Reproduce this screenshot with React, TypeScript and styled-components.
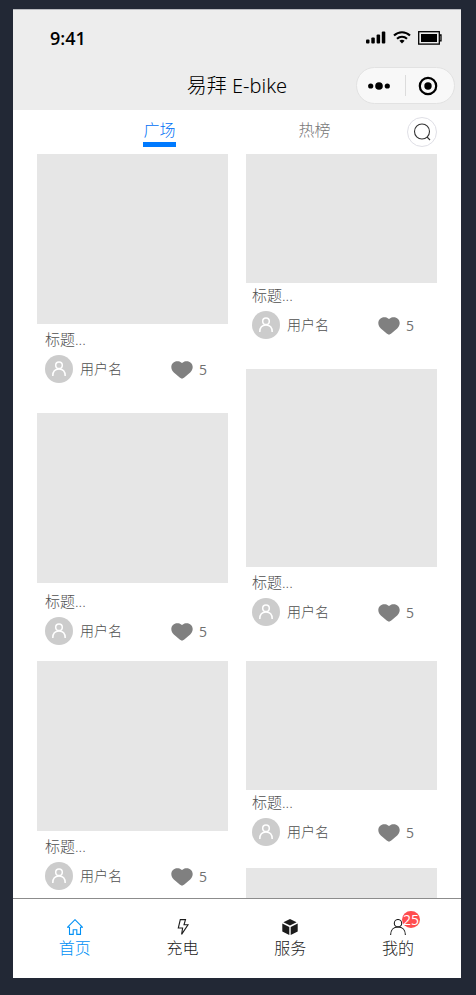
import React from "react";
import styled, { createGlobalStyle } from "styled-components";

const GlobalStyle = createGlobalStyle`
  * { box-sizing: border-box; }
  body {
    margin: 0;
    background: #222835;
    font-family: "Open Sans", "Noto Sans CJK SC", sans-serif;
    font-weight: 300;
    color: #333;
  }
  button {
    font: inherit;
    color: inherit;
    border: 0;
    padding: 0;
    background: none;
    cursor: pointer;
  }
  svg { display: block; }
`;

const Phone = styled.div`
  display: flex;
  flex-direction: column;
  height: calc(100vh - 26px);
  margin: 9px 15px 17px 13px;
  background: #fff;
  border-top: 1px solid #b9bbc0;
  overflow: hidden;
`;

const Header = styled.header`
  flex: none;
  background: #ededed;
  color: #000;
  padding-bottom: 6px;
`;

const StatusBar = styled.div`
  display: flex;
  align-items: center;
  justify-content: space-between;
  height: 57px;
  padding: 0 19px 2px 37px;
`;

const Clock = styled.span`
  font-size: 18px;
  font-weight: 600;
  line-height: 24px;
`;

const StatusIcons = styled.div`
  display: flex;
  align-items: center;
  gap: 7px;
`;

const TitleBar = styled.div`
  display: grid;
  grid-template-columns: 1fr auto 1fr;
  align-items: center;
  padding: 0 6px;
`;

const Title = styled.h1`
  grid-column: 2;
  margin: 0;
  font-family: "Noto Sans", "Noto Sans CJK SC", sans-serif;
  font-size: 20px;
  line-height: 28px;
  font-weight: 300;
`;

const Capsule = styled.div`
  justify-self: end;
  display: grid;
  grid-template-columns: 1fr 1px 1fr;
  align-items: center;
  width: 99px;
  height: 37px;
  border: 1px solid #e2e2e2;
  border-radius: 19px;
  background: #f8f8f8;
`;

const CapsuleButton = styled.button`
  display: flex;
  justify-content: center;
  padding-right: 5px;
`;

const CapsuleDivider = styled.span`
  height: 21px;
  background: #dcdcdc;
`;

const Toolbar = styled.div`
  flex: none;
  display: flex;
  gap: 15px;
  height: 44px;
  padding: 7px 24px 7px 69px;
`;

const Tabs = styled.nav`
  flex: 1;
  display: grid;
  grid-template-columns: 1fr 1fr;
  justify-items: center;
`;

const Tab = styled.button<{ $active?: boolean }>`
  height: 30px;
  font-size: 16px;
  line-height: 24px;
  color: ${(p) => (p.$active ? "#0070f5" : "#777")};
  border-bottom: 5px solid ${(p) => (p.$active ? "#007aff" : "transparent")};
`;

const SearchButton = styled.button`
  display: flex;
  align-items: center;
  justify-content: center;
  width: 30px;
  height: 30px;
  border: 1px solid #dfdfe6;
  border-radius: 50%;
`;

const Feed = styled.main`
  flex: 1;
  min-height: 0;
  display: grid;
  grid-template-columns: 1fr 1fr;
  gap: 18px;
  padding: 0 24px;
  overflow-y: auto;
  scrollbar-width: none;
`;

const Column = styled.div<{ $inset: number }>`
  --inset: ${(p) => p.$inset}px;
`;

const Card = styled.article<{ $after: number }>`
  margin-bottom: ${(p) => p.$after}px;
`;

const Cover = styled.div<{ $height: number }>`
  height: ${(p) => p.$height}px;
  background: #e6e6e6;
`;

const Caption = styled.div<{ $top: number }>`
  padding: ${(p) => p.$top}px calc(29px - var(--inset)) 0 var(--inset);
  color: #505050;
`;

const CardTitle = styled.h2`
  margin: 0 0 6px;
  font-size: 15px;
  line-height: 20px;
  font-weight: 300;
`;

const Meta = styled.div`
  display: flex;
  align-items: center;
  height: 28px;
  font-size: 14px;
  line-height: 20px;
`;

const Avatar = styled.span`
  display: flex;
  align-items: center;
  justify-content: center;
  width: 28px;
  height: 28px;
  margin-right: 7px;
  border-radius: 50%;
  background: #ccc;
`;

const Like = styled.button`
  display: flex;
  align-items: center;
  gap: 6px;
  margin-left: auto;
  padding-top: 2px;
  font-weight: 400;
  color: #707070;
`;

const TabBar = styled.nav`
  flex: none;
  display: grid;
  grid-template-columns: repeat(4, 1fr);
  height: 80px;
  padding: 20px 9px 0 8px;
  border-top: 1px solid #8c8c8c;
  background: #fff;
`;

const TabBarLink = styled.a<{ $active?: boolean }>`
  display: flex;
  flex-direction: column;
  align-items: center;
  gap: 1px;
  font-size: 16px;
  line-height: 24px;
  text-decoration: none;
  color: ${(p) => (p.$active ? "#0090f5" : "#1c1c1c")};
`;

const IconHolder = styled.span`
  position: relative;
`;

const Badge = styled.span`
  position: absolute;
  left: 12px;
  top: -8px;
  width: 18px;
  height: 17px;
  border-radius: 50%;
  background: #ff4d4f;
  color: #fff;
  font-size: 14px;
  line-height: 17px;
  font-weight: 400;
  display: flex;
  justify-content: center;
`;

const SignalIcon = () => (
  <svg width="20" height="13" viewBox="0 0 20 13" aria-hidden="true">
    <rect x="0" y="8.500" width="3.500" height="4" rx="1" />
    <rect x="5.300" y="6.500" width="3.500" height="6" rx="1" />
    <rect x="10.600" y="3.500" width="3.500" height="9" rx="1" />
    <rect x="15.800" y=".5" width="3.500" height="12" rx="1" />
  </svg>
);

const WifiIcon = () => (
  <svg width="18" height="13" viewBox="0 0 18 13" fill="none" stroke="#000" strokeWidth="2.1" aria-hidden="true">
    <path d="M1 4.600C5.600.2 12.400.2 17 4.600" />
    <path d="M4 7.800c2.900-2.700 7.100-2.700 10 0" />
    <path d="M6.400 9.800c1.600-1.300 3.600-1.300 5.200 0L9 12.400z" fill="#000" stroke="none" />
  </svg>
);

const BatteryIcon = () => (
  <svg width="24" height="14" viewBox="0 0 24 14" aria-hidden="true">
    <rect x=".7" y=".7" width="20.600" height="12.400" fill="none" stroke="#000" strokeWidth="1.3" />
    <rect x="3" y="3" width="16" height="8" />
    <path d="M21.300 4h1.700v5.800h-1.700" fill="none" stroke="#000" strokeWidth="1.3" />
  </svg>
);

const DotsIcon = () => (
  <svg width="22" height="8" viewBox="0 0 22 8" aria-hidden="true">
    <circle cx="2.7" cy="4" r="2.6" />
    <circle cx="11" cy="4" r="3.8" />
    <circle cx="19.3" cy="4" r="2.6" />
  </svg>
);

const TargetIcon = () => (
  <svg width="20" height="20" viewBox="0 0 20 20" aria-hidden="true">
    <circle cx="10" cy="10" r="8.2" fill="none" stroke="#000" strokeWidth="2.2" />
    <circle cx="10" cy="10" r="3.7" />
  </svg>
);

const SearchIcon = () => (
  <svg width="18" height="18" viewBox="0 0 18 18" fill="none" stroke="#333" strokeWidth="1.1" aria-hidden="true">
    <circle cx="9" cy="8.5" r="7.5" />
    <path d="m14 14 3 3" />
  </svg>
);

const PersonIcon = () => (
  <svg width="16" height="16" viewBox="0 0 16 16" fill="none" stroke="currentColor" strokeWidth="1.1" aria-hidden="true">
    <circle cx="8" cy="4.2" r="3.7" />
    <path d="M.6 16C.6 11.200 3.600 8 8 8s7.400 3.200 7.400 8" />
  </svg>
);

const AvatarIcon = () => (
  <svg width="14" height="16" viewBox="0 0 14 16" fill="none" stroke="#fff" strokeWidth="1.5" aria-hidden="true">
    <circle cx="7" cy="4.3" r="3.3" />
    <path d="M.8 15c0-4.300 2.500-6.900 6.200-6.900s6.200 2.600 6.200 6.900" />
  </svg>
);

const HeartIcon = () => (
  <svg width="22" height="18" viewBox="0 0 22 18" fill="#808080" aria-hidden="true">
    <path d="M11 2.100C9.300.5 7.800.2 6.300.2 2.900.2.3 2.800.3 6.100c0 2.200 1 3.900 2.500 5.300L9 16.800c1.400 1.100 2.600 1.100 4 0l6.200-5.400c1.500-1.400 2.500-3.100 2.500-5.300 0-3.300-2.600-5.900-6-5.900-1.500 0-3 .3-4.700 1.900z" />
  </svg>
);

const HomeIcon = () => (
  <svg width="16" height="16" viewBox="0 0 16 16" fill="none" stroke="currentColor" strokeWidth="1.1" aria-hidden="true">
    <path d="M.4 8.300 8 .7l7.600 7.600h-2.100v7.100H9.800v-4.700H6.200v4.700H2.500V8.300z" />
  </svg>
);

const BoltIcon = () => (
  <svg width="16" height="16" viewBox="0 0 16 16" fill="none" stroke="currentColor" strokeWidth="1.1" aria-hidden="true">
    <path d="M5.300.6h5.200L9 5.800h4L6.600 15.400l1-6.400H3.300z" />
  </svg>
);

const CubeIcon = () => (
  <svg width="16" height="16" viewBox="0 0 16 16" fill="currentColor" aria-hidden="true">
    <path d="m8 0 6.600 3.200L8 6.500 1.400 3.200zM.3 4.500l7 3.500v8l-7-3.600zM15.700 4.500v7.900l-7 3.600V8z" />
  </svg>
);

type Post = { cover: number; top: number; after: number; loading?: boolean };

const leftPosts: Post[] = [
  { cover: 170, top: 5, after: 30 },
  { cover: 170, top: 8, after: 16 },
  { cover: 170, top: 5, after: 0 },
];

const rightPosts: Post[] = [
  { cover: 129, top: 2, after: 30 },
  { cover: 198, top: 5, after: 35 },
  { cover: 129, top: 2, after: 22 },
  { cover: 129, top: 2, after: 0, loading: true },
];

const PostColumn = ({ posts, inset }: { posts: Post[]; inset: number }) => (
  <Column $inset={inset}>
    {posts.map((post, i) => (
      <Card key={i} $after={post.after}>
        <Cover $height={post.cover} />
        {!post.loading && (
          <Caption $top={post.top}>
            <CardTitle>标题...</CardTitle>
            <Meta>
              <Avatar>
                <AvatarIcon />
              </Avatar>
              用户名
              <Like aria-label="点赞 5">
                <HeartIcon />5
              </Like>
            </Meta>
          </Caption>
        )}
      </Card>
    ))}
  </Column>
);

export default function App() {
  return (
    <>
      <GlobalStyle />
      <Phone>
        <Header>
          <StatusBar>
            <Clock>9:41</Clock>
            <StatusIcons>
              <SignalIcon />
              <WifiIcon />
              <BatteryIcon />
            </StatusIcons>
          </StatusBar>
          <TitleBar>
            <Title>易拜 E-bike</Title>
            <Capsule>
              <CapsuleButton aria-label="更多">
                <DotsIcon />
              </CapsuleButton>
              <CapsuleDivider />
              <CapsuleButton aria-label="关闭">
                <TargetIcon />
              </CapsuleButton>
            </Capsule>
          </TitleBar>
        </Header>
        <Toolbar>
          <Tabs>
            <Tab $active>广场</Tab>
            <Tab>热榜</Tab>
          </Tabs>
          <SearchButton aria-label="搜索">
            <SearchIcon />
          </SearchButton>
        </Toolbar>
        <Feed>
          <PostColumn posts={leftPosts} inset={8} />
          <PostColumn posts={rightPosts} inset={6} />
        </Feed>
        <TabBar>
          <TabBarLink href="#home" $active>
            <HomeIcon />
            首页
          </TabBarLink>
          <TabBarLink href="#charge">
            <BoltIcon />
            充电
          </TabBarLink>
          <TabBarLink href="#service">
            <CubeIcon />
            服务
          </TabBarLink>
          <TabBarLink href="#mine">
            <IconHolder>
              <PersonIcon />
              <Badge>25</Badge>
            </IconHolder>
            我的
          </TabBarLink>
        </TabBar>
      </Phone>
    </>
  );
}
